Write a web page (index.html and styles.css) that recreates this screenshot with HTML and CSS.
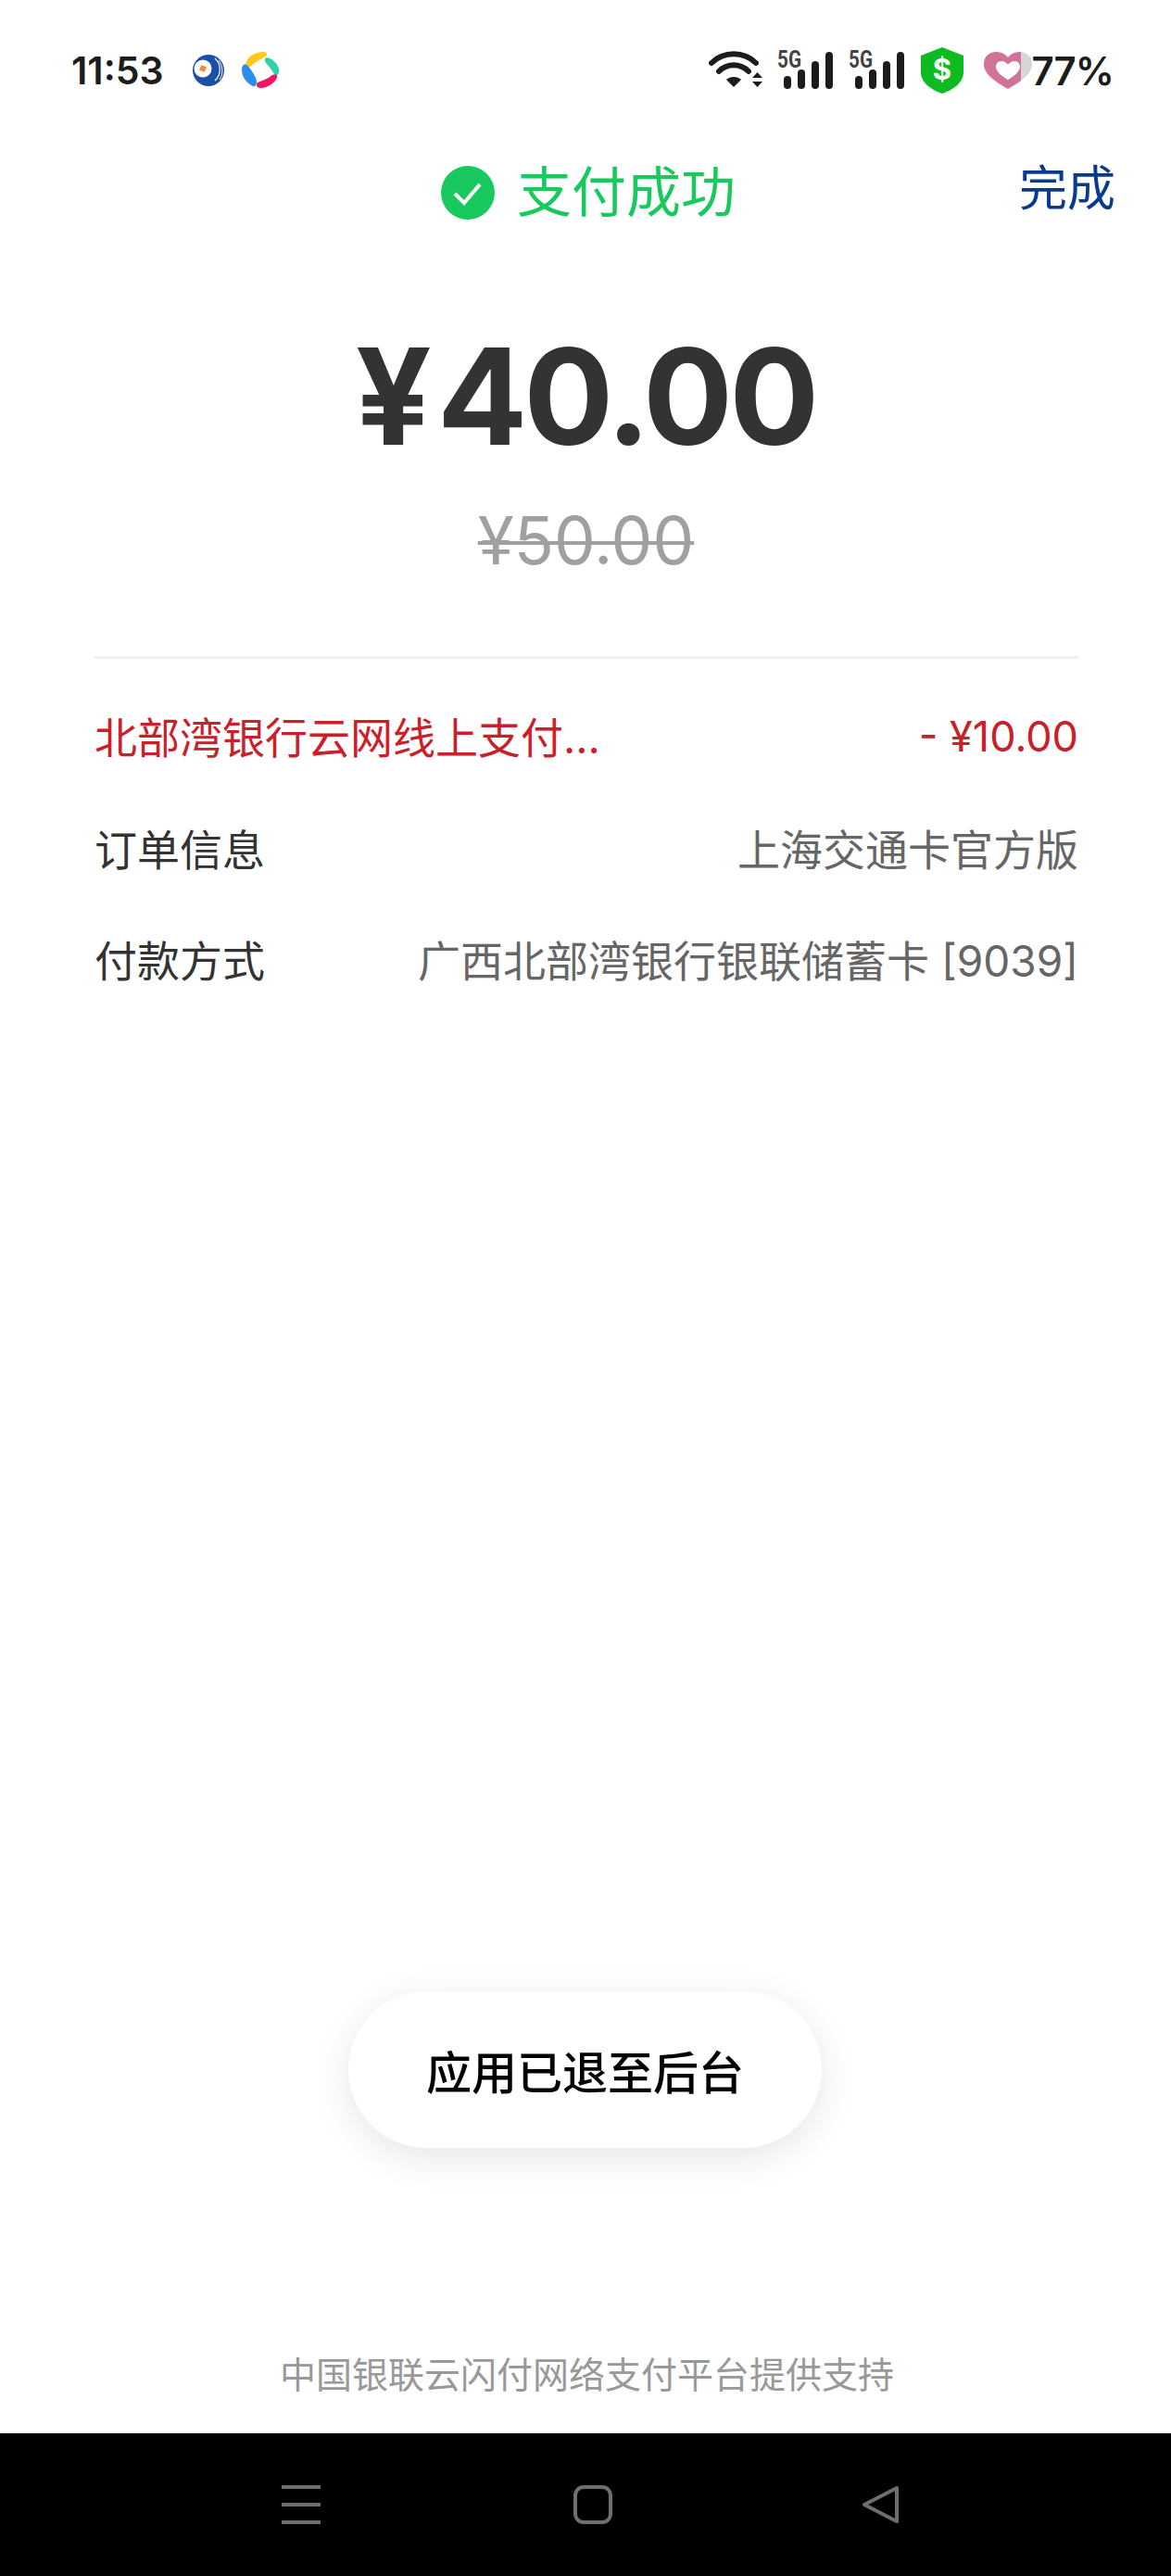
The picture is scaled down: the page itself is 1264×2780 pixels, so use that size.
FILE: index.html
```html
<!DOCTYPE html>
<html lang="zh-CN">
<head>
    <meta charset="UTF-8">
    <meta name="viewport" content="width=device-width, initial-scale=1.0">
    <title>支付成功</title>
    <link rel="stylesheet" href="styles.css">
</head>
<body>
    <!-- Status bar -->
    <div class="status-bar">
        <div class="status-left">
            <span class="clock">11:53</span>
            <svg class="logo-one" viewBox="0 0 34 34">
                <circle cx="17" cy="17" r="17" fill="#1c4fa8"/>
                <circle cx="11" cy="15" r="9.500" fill="#ffffff"/>
                <path d="M24 4C31 10 31 22 24 28" fill="none" stroke="#ffffff" stroke-width="1.200"/>
                <path d="M28 6C33 13 33 21 29 27" fill="none" stroke="#ffffff" stroke-width="1"/>
                <rect x="8" y="12" width="6" height="6" fill="#ee8a3a" transform="rotate(20 11 15)"/>
            </svg>
            <svg class="logo-two" viewBox="0 0 40 40">
                <path d="M4 13C6 5 14 0 24 0C27 0 28 3 26 5C20 8 14 11 10 15C7 18 3 17 4 13Z" fill="#ffc917"/>
                <path d="M27 6C33 7 38 12 40 18C41 24 38 27 35 24C32 19 29 15 26 12C24 9 25 6 27 6Z" fill="#2fd3a8"/>
                <path d="M5 14C9 17 12 22 15 28C17 33 16 38 12 37C6 34 0 28 0 19C0 14 3 12 5 14Z" fill="#2b8df2"/>
                <path d="M17 33C22 31 28 29 33 25C37 23 39 26 38 28C35 34 28 39 20 39C16 39 15 35 17 33Z" fill="#f2155f"/>
            </svg>
        </div>
        <div class="status-right">
            <svg class="wifi" viewBox="0 0 60 44">
                <path d="M3 15C16 2 38 2 51 15" fill="none" stroke="#1c1c1c" stroke-width="6" stroke-linecap="round"/>
                <path d="M11 24C20 15 34 15 43 24" fill="none" stroke="#1c1c1c" stroke-width="6" stroke-linecap="round"/>
                <path d="M19 33C23 29 31 29 35 33L27 41Z" fill="#1c1c1c"/>
                <path d="M47 31L52.500 25L58 31Z M47 35L52.500 41L58 35Z" fill="#1c1c1c"/>
            </svg>
            <svg class="signal" viewBox="0 -6 61 50">
                <text class="signal-label" x="0" y="20" textLength="26" lengthAdjust="spacingAndGlyphs">5G</text>
                <rect x="7" y="29" width="8" height="14" rx="4"/>
                <rect x="22" y="22" width="8" height="21" rx="4"/>
                <rect x="37" y="13" width="8" height="30" rx="4"/>
                <rect x="52" y="3" width="8" height="40" rx="4"/>
            </svg>
            <svg class="signal" viewBox="0 -6 61 50">
                <text class="signal-label" x="0" y="20" textLength="26" lengthAdjust="spacingAndGlyphs">5G</text>
                <rect x="7" y="29" width="8" height="14" rx="4"/>
                <rect x="22" y="22" width="8" height="21" rx="4"/>
                <rect x="37" y="13" width="8" height="30" rx="4"/>
                <rect x="52" y="3" width="8" height="40" rx="4"/>
            </svg>
            <svg class="shield" viewBox="0 0 46 50">
                <path d="M23 0L46 9V27C46 38 35 46 23 50C11 46 0 38 0 27V9Z" fill="#0dbb21"/>
                <text class="shield-mark" x="23" y="35" text-anchor="middle">$</text>
            </svg>
            <svg class="heart" viewBox="0 0 52 40">
                <defs>
                    <linearGradient id="heart-level">
                        <stop offset="0.77" stop-color="#cf7398"/>
                        <stop offset="0.77" stop-color="#d6d6d6"/>
                    </linearGradient>
                </defs>
                <path d="M26 40C12 32 0 24 0 13C0 5 6 0 13 0C18 0 23 2 26 6C29 2 34 0 39 0C46 0 52 5 52 13C52 24 40 32 26 40Z" fill="url(#heart-level)"/>
                <path d="M26 30C19 26 13 21 13 16C13 12 16 10 19 10C22 10 25 12 26 14C27 12 30 10 33 10C36 10 39 12 39 16C39 21 33 26 26 30Z" fill="#ffffff"/>
            </svg>
            <span class="battery">77%</span>
        </div>
    </div>

    <!-- Title -->
    <div class="title-bar">
        <div class="title-main">
            <svg class="check" viewBox="0 0 58 58">
                <circle cx="29" cy="29" r="29" fill="#18ca5e"/>
                <path d="M15 30L25 40L42 20" fill="none" stroke="#ffffff" stroke-width="4"/>
            </svg>
            <span class="title-text">支付成功</span>
        </div>
        <span class="done">完成</span>
    </div>

    <!-- Amount -->
    <div class="amount"><span class="currency">¥</span>40.00</div>
    <div class="old-amount">¥50.00</div>

    <!-- Detail rows -->
    <div class="details">
        <div class="row row-discount">
            <span>北部湾银行云网线上支付...</span>
            <span class="row-amount">- ¥10.00</span>
        </div>
        <div class="row">
            <span class="row-label">订单信息</span>
            <span>上海交通卡官方版</span>
        </div>
        <div class="row">
            <span class="row-label">付款方式</span>
            <span>广西北部湾银行银联储蓄卡 [9039]</span>
        </div>
    </div>

    <div class="toast">应用已退至后台</div>

    <div class="support">中国银联云闪付网络支付平台提供支持</div>

    <!-- Nav bar -->
    <div class="nav-bar">
        <svg class="nav-icon" viewBox="0 0 42 42">
            <path d="M0 2H42M0 21H42M0 40H42" fill="none" stroke="#6e6e6e" stroke-width="4"/>
        </svg>
        <svg class="nav-icon nav-home" viewBox="0 0 42 42">
            <rect x="2" y="2" width="38" height="38" rx="9" fill="none" stroke="#6e6e6e" stroke-width="4"/>
        </svg>
        <svg class="nav-icon" viewBox="0 0 42 42">
            <path d="M38 3L3 21L38 39Z" fill="none" stroke="#6e6e6e" stroke-width="4" stroke-linejoin="round"/>
        </svg>
    </div>
</body>
</html>
```

FILE: styles.css
```css
body {
    margin: 0;
    width: 1264px;
    height: 2780px;
    display: flex;
    flex-direction: column;
    position: relative;
    overflow: hidden;
    background-color: #fff;
    font-family: "Inter", "Noto Sans CJK SC", sans-serif;
}

/* Status bar */
.status-bar {
    height: 152px;
    display: flex;
    align-items: center;
    justify-content: space-between;
    padding: 0 62px 0 77px;
    flex-shrink: 0;
}

.status-left,
.status-right {
    display: flex;
    align-items: center;
}

.clock {
    font-size: 41px;
    font-weight: 600;
    color: #1c1c1c;
    width: 131px;
}

.logo-one {
    width: 34px;
    height: 34px;
    margin-right: 19px;
}

.logo-two {
    width: 40px;
    height: 40px;
}

.wifi {
    width: 60px;
    height: 44px;
    margin-right: 14px;
    margin-bottom: 2px;
}

.signal {
    width: 61px;
    height: 50px;
    margin-top: -6px;
    margin-right: 16px;
    margin-bottom: 2px;
    fill: #1c1c1c;
}

.signal-label {
    font-family: "Roboto", sans-serif;
    font-size: 25px;
    font-weight: 700;
    fill: #444;
}

.shield {
    width: 46px;
    height: 50px;
    margin-left: 1px;
    margin-right: 22px;
}

.shield-mark {
    font-family: "Inter", sans-serif;
    font-size: 31px;
    font-weight: 700;
    fill: #fff;
}

.heart {
    width: 52px;
    height: 40px;
}

.battery {
    font-size: 42px;
    font-weight: 600;
    letter-spacing: -1px;
    color: #1c1c1c;
}

/* Title */
.title-bar {
    height: 112px;
    position: relative;
    display: flex;
    align-items: center;
    justify-content: center;
    flex-shrink: 0;
}

.title-main {
    display: flex;
    align-items: center;
    gap: 24px;
    margin-left: 6px;
}

.check {
    width: 58px;
    height: 58px;
}

.title-text {
    font-size: 59px;
    color: #18ca5e;
    line-height: 70px;
}

.done {
    position: absolute;
    right: 60px;
    top: 20px;
    font-size: 52px;
    line-height: 64px;
    color: #0a3a8c;
}

/* Amount */
.amount {
    margin-top: 84px;
    height: 160px;
    line-height: 160px;
    text-align: center;
    font-size: 144px;
    font-weight: 700;
    letter-spacing: -4px;
    color: #333;
}

.currency {
    margin-right: 10px;
}

.old-amount {
    margin-top: 35px;
    height: 80px;
    line-height: 80px;
    padding-left: 1px;
    text-align: center;
    font-size: 71px;
    color: #a0a0a0;
    text-decoration: line-through;
    text-decoration-thickness: 4px;
}

/* Rows */
.details {
    margin: 85px 100px 0 102px;
    padding-top: 22px;
    border-top: 3px solid #f0f0f0;
    flex: 1;
}

.row {
    height: 120.500px;
    display: flex;
    align-items: center;
    justify-content: space-between;
    font-size: 46px;
    color: #666;
}

.row-label {
    color: #333;
}

.row-discount {
    color: #c9202a;
}

.row-amount {
    margin-top: 3px;
    font-size: 45px;
}

.toast {
    position: absolute;
    left: 376px;
    top: 2149px;
    width: 511px;
    height: 169px;
    border-radius: 85px;
    display: flex;
    align-items: center;
    justify-content: center;
    background-color: #fff;
    box-shadow: 0 10px 40px rgba(0, 0, 0, 0.1);
    font-size: 49px;
    font-weight: 500;
    color: #000;
}

.support {
    height: 126px;
    line-height: 126px;
    padding-left: 3px;
    text-align: center;
    font-size: 39px;
    color: #999;
    flex-shrink: 0;
}

/* Nav bar */
.nav-bar {
    height: 154px;
    background-color: #000;
    display: flex;
    align-items: center;
    padding: 0 292px 0 304px;
    justify-content: space-between;
    flex-shrink: 0;
}

.nav-icon {
    width: 42px;
    height: 42px;
}

.nav-home {
    margin-left: 4px;
}
```
